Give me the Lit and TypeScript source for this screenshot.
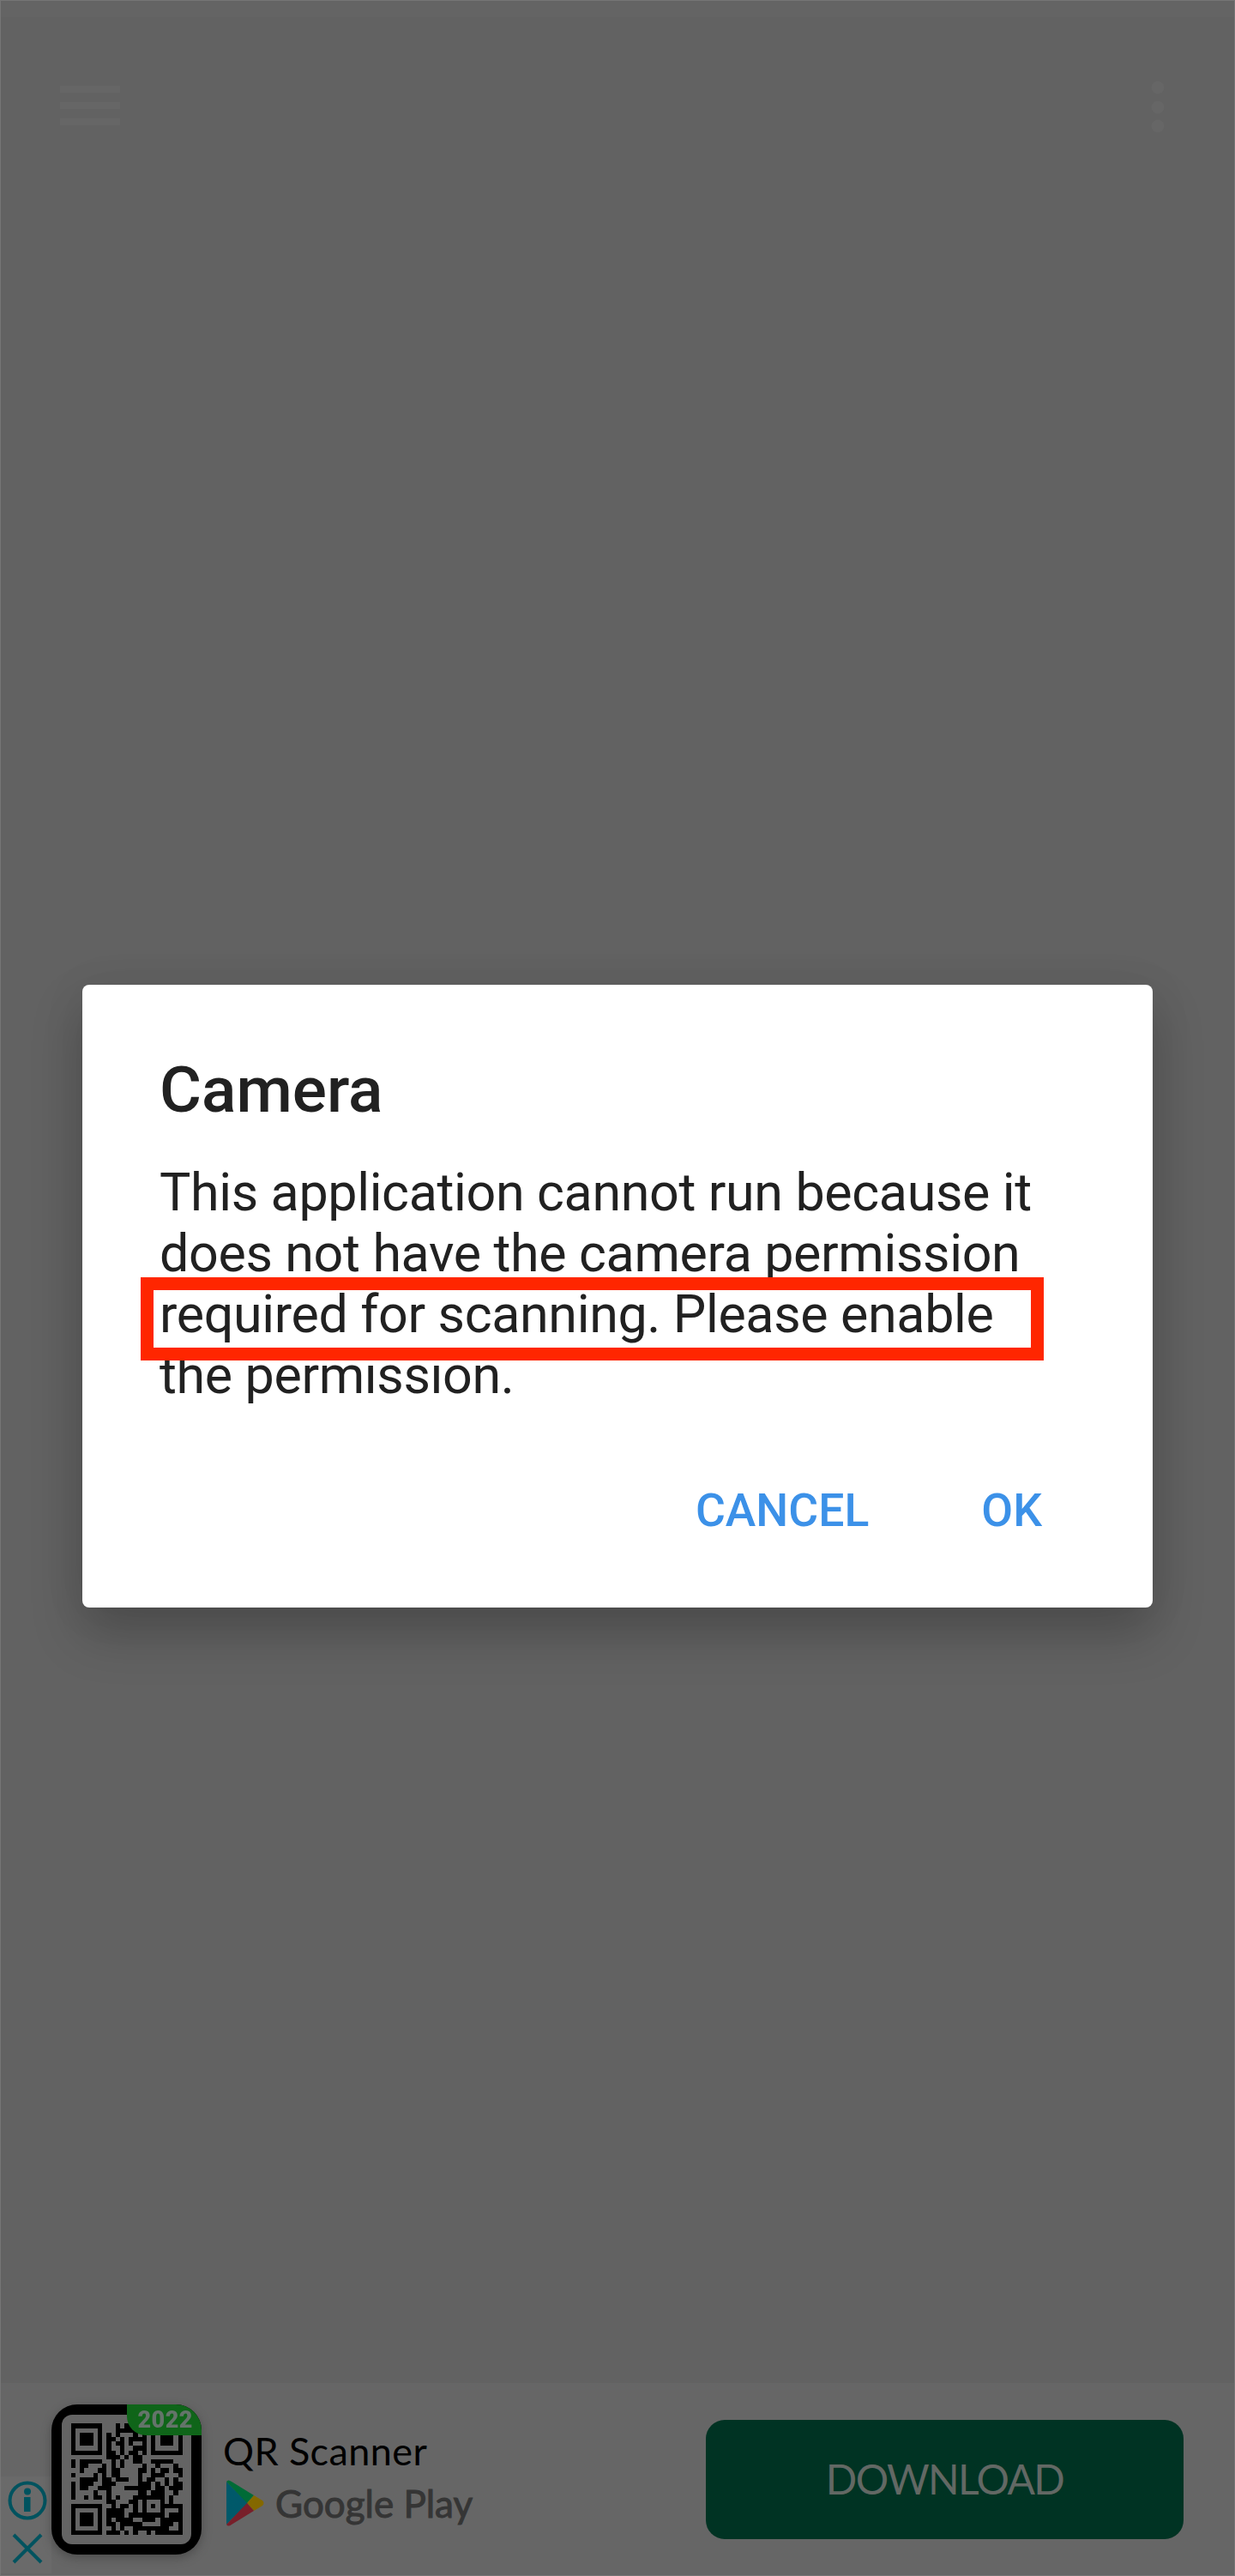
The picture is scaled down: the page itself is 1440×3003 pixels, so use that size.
import { LitElement, html, css, svg } from "lit";
import { customElement } from "lit/decorators.js";

// QR modules, one string per row.
const QR = [
"1111111000101100001111111",
"1000001000111110001000001",
"1011101010100010101011101",
"1011101011010111101011101",
"1011101010110100101011101",
"1000001010010011101000001",
"1111111011010110101111111",
"0000000011101011000000000",
"1011111001010011001111100",
"1011000101010000100100010",
"0010001101100001101011011",
"1000010101100001001110001",
"0011110110111001011001010",
"1011100111000001110101011",
"1011001110001111110110111",
"1000010010000001101110010",
"1001011010100011111110100",
"0000000011000110100010100",
"1111111001011010101011111",
"1000001011110010100010001",
"1011101011110111111110111",
"1011101010111100111011111",
"1011101011011111000011101",
"1000001001010011111111001",
"1111111011101010010111111",
];

@customElement("app-root")
export class AppRoot extends LitElement {
  static styles = css`
    :host { display: block; font-family: Roboto, "Liberation Sans", sans-serif; }
    * { box-sizing: border-box; }
    .screen { position: relative; height: 3003px; background: #626262; display: flex; flex-direction: column; overflow: hidden; border: 1px solid #757575; }
    .status { height: 19px; background: #646464; }
    .bar { display: flex; justify-content: space-between; padding: 74px 81px 0 69px; height: 160px; }
    .bar svg { display: block; }
    .main { flex: 1; display: flex; align-items: flex-start; padding: 968px 95px 0; }
    .dialog { width: 1248px; height: 726px; background: #fff; border-radius: 8px; color: #212121; padding: 78px 90px 0; box-shadow: 0 30px 60px rgba(0,0,0,.22), 0 4px 55px rgba(0,0,0,.06); }
    h1 { margin: 0; font-size: 75px; line-height: 88px; font-weight: 500; }
    .msg { margin: 41px 0 0; font-size: 61px; letter-spacing: -0.37px; line-height: 71px; white-space: nowrap; position: relative; }
    .mark { position: absolute; left: -22px; top: 134px; width: 1053px; height: 97px; border: 15px solid #ff2600; }
    .actions { display: flex; justify-content: flex-end; gap: 131px; padding: 90px 39px 0 0; font-size: 53.5px; line-height: 64px; font-weight: 500; color: #3c91e8; }
    .ad { height: 224px; background: #666; display: flex; align-items: flex-start; }
    .side { width: 59px; height: 113px; margin-top: 109px; background: #6a6a6a; }
    .icon { margin-top: 25px; filter: drop-shadow(0 4px 6px rgba(0,0,0,.25)); width: 176px; height: 176px; display: block; overflow: visible; }
    .side svg, .store svg { display: block; }
    .info { margin: 53px 0 0 24px; color: #000; font-family: Lato, sans-serif; white-space: nowrap; flex: 1; }
    .name { font-size: 45px; line-height: 52px; letter-spacing: 0.4px; }
    .store { display: flex; gap: 13px; align-items: center; margin: 8px 0 0 4px; height: 54px; font-size: 44px; color: #353535; -webkit-text-stroke: 1px #353535; }
    .dl { margin: 43px 59px 0 0; width: 557px; height: 139px; background: #003323; border-radius: 22px; color: #626864; display: flex; align-items: center; justify-content: center; font-family: Lato, sans-serif; font-size: 48px; letter-spacing: -1.6px; padding-bottom: 3px; }
  `;

  private qr() {
    const d = QR.map((r, y) => [...r].map((c, x) => (c === "1" ? `M${x} ${y}h1v1h-1z` : "")).join("")).join("");
    return svg`<path transform="translate(22.7 22.3) scale(5.2)" d=${d} fill="#000" shape-rendering="crispEdges"/>`;
  }

  render() {
    return html`<div class="screen">
      <div class="status"></div>
      <div class="bar">
        <svg width="72" height="60" fill="#666"><path d="M0 6h70v8H0zM0 25h70v8H0zM0 44h70v8H0z"/></svg>
        <svg width="16" height="72" fill="#666"><circle cx="8" cy="8" r="7.5"/><circle cx="8" cy="31" r="7.5"/><circle cx="8" cy="53" r="7.5"/></svg>
      </div>
      <div class="main">
        <div class="dialog" role="dialog">
          <h1>Camera</h1>
          <div class="msg">This application cannot run because it<br>does not have the camera permission<br>required for scanning. Please enable<br>the permission.<div class="mark"></div></div>
          <div class="actions"><span>CANCEL</span><span>OK</span></div>
        </div>
      </div>
      <div class="ad">
        <div class="side">
          <svg width="59" height="113" fill="none" stroke="#00535f" stroke-width="4"><circle cx="31" cy="28" r="20.5"/><circle cx="31" cy="17.5" r="4" fill="#00535f" stroke="none"/><path d="M27 24h7.500v17H27z" fill="#00535f" stroke="none"/><path d="M15 68l32 32M47 68l-32 32"/></svg>
        </div>
        <svg class="icon" viewBox="0 0 176 176">
          <rect width="175" height="175" rx="30"/><rect x="12" y="12" width="151" height="151" rx="12" fill="#646464"/>
          ${this.qr()}
          <path d="M88 0h57a30 30 0 0 1 30 30v6h-65a22 22 0 0 1-22-22z" fill="#0f6519"/>
          <text x="132.500" y="27" text-anchor="middle" font-family="Roboto" font-weight="900" font-size="27" textLength="64" fill="#64746a">2022</text>
        </svg>
        <div class="info">
          <div class="name">QR Scanner</div>
          <div class="store">
            <svg width="44" height="54"><path d="M0 2L25 27 0 52z" fill="#00596a"/><path d="M0 2Q2-1 6 2L32 18 24 27z" fill="#006b37"/><path d="M32 18l10 6q3 3 0 6l-10 6-8-9z" fill="#846800"/><path d="M0 52q2 3 6 0l26-16-8-9z" fill="#781f2a"/></svg>
            <span>Google Play</span>
          </div>
        </div>
        <div class="dl">DOWNLOAD</div>
      </div>
    </div>`;
  }
}
